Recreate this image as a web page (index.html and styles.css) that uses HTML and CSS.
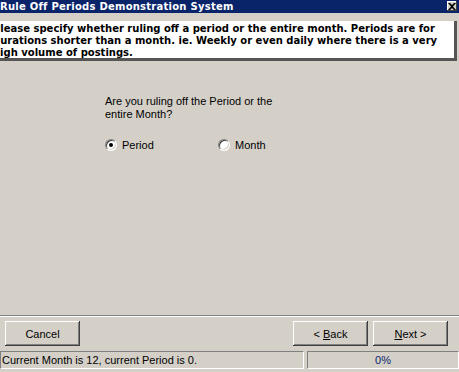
FILE: index.html
```html
<!DOCTYPE html>
<html lang="en">
<head>
<meta charset="UTF-8">
<title>Rule Off Periods Demonstration System</title>
<link rel="stylesheet" href="styles.css">
</head>
<body>
<div class="window">
    <div class="titlebar">
        <span class="title">Rule Off Periods Demonstration System</span>
        <span class="close">
            <svg width="8" height="7" viewBox="0 0 8 7"><path d="M0 0h2l2 2 2-2h2L5 3.5 8 7H6L4 5 2 7H0l3-3.5z" fill="#000"/></svg>
        </span>
    </div>

    <div class="banner">
        <p>Please specify whether ruling off a period or the entire month. Periods are for<br>durations shorter than a month. ie. Weekly or even daily where there is a very<br>high volume of postings.</p>
    </div>

    <div class="content">
        <p class="question">Are you ruling off the Period or the<br>entire Month?</p>
        <div class="options">
            <label class="option"><span class="radio checked"></span>Period</label>
            <label class="option"><span class="radio"></span>Month</label>
        </div>
    </div>

    <div class="separator"></div>

    <div class="buttons">
        <button class="btn">Cancel</button>
        <div class="nav">
            <button class="btn">&lt; <u>B</u>ack</button>
            <button class="btn"><u>N</u>ext &gt;</button>
        </div>
    </div>

    <div class="statusbar">
        <div class="panel status-text">Current Month is 12, current Period is 0.</div>
        <div class="panel progress">0%</div>
    </div>
</div>
</body>
</html>
```

FILE: styles.css
```css
html,
body {
    margin: 0;
    height: 100%;
}

body {
    background: #d4d0c8;
    font-family: 'Liberation Sans', Arial, sans-serif;
    font-size: 11px;
    color: #000;
}

.window {
    width: 459px;
    height: 372px;
    display: flex;
    flex-direction: column;
    overflow: hidden;
}

.titlebar {
    height: 13px;
    background: #0a246a;
    display: flex;
    align-items: center;
    justify-content: space-between;
    padding-right: 2px;
}

.title {
    color: #fff;
    font-family: 'DejaVu Sans', sans-serif;
    font-weight: bold;
    font-size: 10px;
    letter-spacing: 0.25px;
    margin-top: -1px;
    white-space: nowrap;
}

.close {
    width: 10px;
    height: 10px;
    margin-top: -1px;
    background: #d4d0c8;
    box-shadow: inset -1px -1px #404040, inset 1px 1px #fff;
    display: flex;
    align-items: center;
    justify-content: center;
}

.banner {
    margin-top: 8px;
    margin-right: 2px;
    height: 37px;
    background: #fff;
    border-right: 3px solid #555;
    border-bottom: 3px solid #555;
    overflow: hidden;
}

.banner p {
    margin: 2px 0 0 -7px;
    font-family: 'DejaVu Sans', sans-serif;
    font-weight: bold;
    font-size: 10px;
    line-height: 12px;
    white-space: nowrap;
}

.content {
    flex: 1;
    padding: 34px 0 0 105px;
}

.question {
    margin: 0;
    line-height: 13px;
}

.options {
    display: flex;
    margin-top: 18px;
}

.option {
    display: flex;
    align-items: center;
    width: 113px;
    gap: 5px;
}

.radio {
    width: 12px;
    height: 12px;
    border-radius: 50%;
    background: #fff;
    box-sizing: border-box;
    border: 1px solid;
    border-color: #808080 #fff #fff #808080;
    box-shadow: inset 1px 1px #404040, inset -1px -1px #d4d0c8;
    display: flex;
    align-items: center;
    justify-content: center;
}

.radio.checked::after {
    content: '';
    width: 4px;
    height: 4px;
    border-radius: 50%;
    background: #000;
}

.separator {
    height: 1px;
    background: #808080;
    border-bottom: 1px solid #fff;
}

.buttons {
    display: flex;
    justify-content: space-between;
    padding: 4px 11px 0 5px;
    height: 30px;
}

.nav {
    display: flex;
    gap: 5px;
}

.btn {
    width: 75px;
    height: 25px;
    padding: 0;
    border: 0;
    background: #d4d0c8;
    font-family: inherit;
    font-size: 11px;
    color: #000;
    box-shadow: inset -1px -1px #404040, inset 1px 1px #fff, inset -2px -2px #808080;
}

.statusbar {
    display: flex;
    gap: 3px;
    height: 18px;
    margin-bottom: 3px;
}

.panel {
    box-sizing: border-box;
    border: 1px solid;
    border-color: #808080 #fff #fff #808080;
    display: flex;
    align-items: center;
    white-space: nowrap;
}

.status-text {
    width: 304px;
    padding-left: 1px;
}

.progress {
    flex: 1;
    justify-content: center;
    color: #0a246a;
}
```
